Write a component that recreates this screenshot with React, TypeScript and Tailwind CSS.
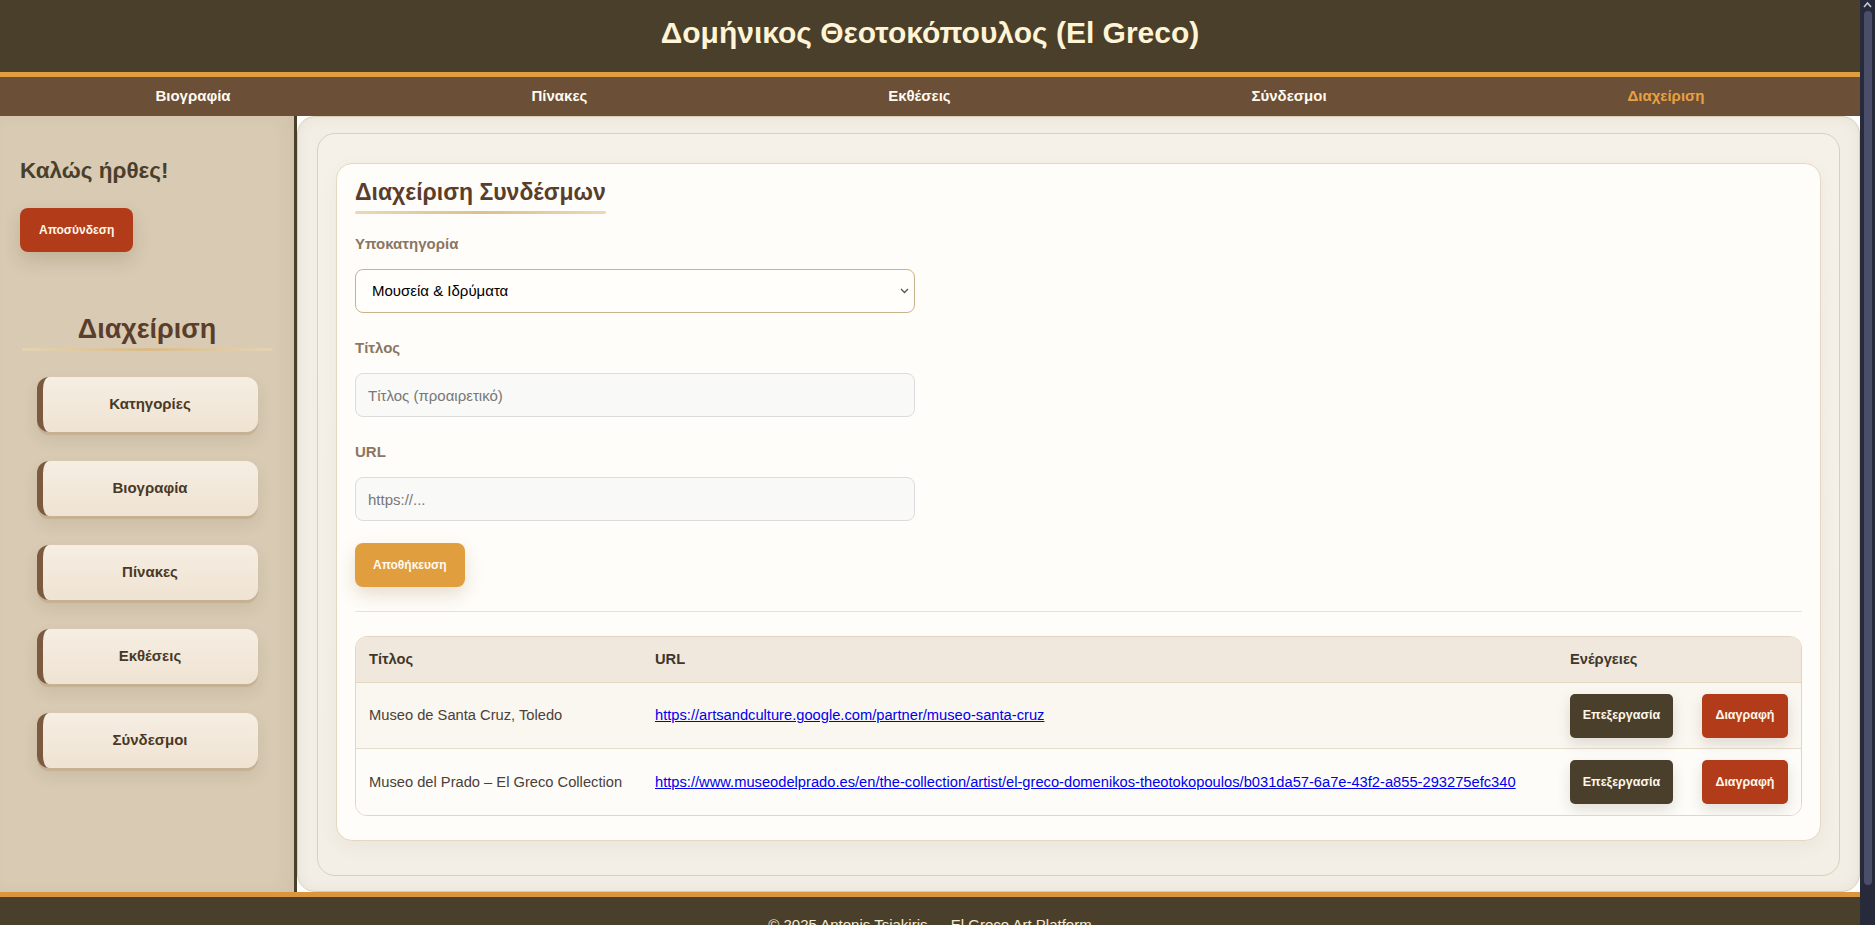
import React from "react";

const navItems = ["Βιογραφία", "Πίνακες", "Εκθέσεις", "Σύνδεσμοι", "Διαχείριση"];
const adminLinks = ["Κατηγορίες", "Βιογραφία", "Πίνακες", "Εκθέσεις", "Σύνδεσμοι"];
const links = [
  {
    title: "Museo de Santa Cruz, Toledo",
    url: "https://artsandculture.google.com/partner/museo-santa-cruz",
    bg: "bg-[#faf7f1]",
  },
  {
    title: "Museo del Prado – El Greco Collection",
    url: "https://www.museodelprado.es/en/the-collection/artist/el-greco-domenikos-theotokopoulos/b031da57-6a7e-43f2-a855-293275efc340",
    bg: "bg-[#fdfcf8]",
  },
];

function Sidebar() {
  return (
    <aside className="w-[297px] shrink-0 border-r-[3px] border-[#4a3f2a] bg-[#d8cab3] shadow-[inset_-8px_0_14px_rgba(120,90,50,0.06)]">
      <div className="px-5 pt-[42px]">
        <h2 className="text-[22.5px] leading-[26px] font-bold text-[#4a3f2a]">Καλώς ήρθες!</h2>
        <button className="mt-6 h-[44px] rounded-lg bg-[#b23c1a] px-[19px] text-[12px] font-bold text-[#fff6e6] shadow-[0_8px_18px_rgba(90,60,30,0.18)]">
          Αποσύνδεση
        </button>
      </div>

      <div className="mt-[60px] flex flex-col items-center">
        <h2 className="text-[27px] leading-[34px] font-bold text-[#5a3e2b]">Διαχείριση</h2>
        <div className="mt-[2px] h-[3px] w-[251px] rounded-full bg-linear-to-r from-[#e4d3b4] via-[#d9bb8a] to-[#e4d3b4]" />
        <div className="mt-[26px] flex flex-col gap-[29px]">
          {adminLinks.map((l) => (
            <button
              key={l}
              className="h-[55px] w-[221px] rounded-xl border-l-[6px] border-[#7b5a40] bg-linear-to-b from-[#f6eee3] to-[#efe3d2] text-[15px] font-bold text-[#4a3826] shadow-[0_3px_0_#c6b194,0_8px_16px_rgba(90,60,30,0.10)]"
            >
              {l}
            </button>
          ))}
        </div>
      </div>
    </aside>
  );
}

function Field({ label, children, first }: { label: string; children: React.ReactNode; first?: boolean }) {
  return (
    <div className={first ? "mt-[21px]" : "mt-[26px]"}>
      <label className="block text-[15px] leading-[18px] font-bold text-[#8b7662]">{label}</label>
      <div className="mt-4">{children}</div>
    </div>
  );
}

function LinksCard() {
  return (
    <div className="rounded-2xl border border-[#e4d8c2] bg-[#fffdf9] px-[18px] pt-[14px] pb-6 shadow-[0_6px_18px_rgba(120,90,50,0.06)]">
      <div className="inline-flex flex-col">
        <h2 className="text-[23px] leading-[29px] font-bold text-[#5a3e2b]">Διαχείριση Συνδέσμων</h2>
        <div className="mt-1 h-[3px] rounded-full bg-linear-to-r from-[#ead8b6] via-[#dcc08f] to-[#ead8b6]" />
      </div>

      <div className="w-[560px]">
        <Field label="Υποκατηγορία" first>
          <div className="relative">
            <select className="h-[44px] w-full appearance-none rounded-lg border border-[#c9b38e] bg-[#fffefa] px-4 text-[15px] text-black">
              <option>Μουσεία &amp; Ιδρύματα</option>
            </select>
            <svg
              width="9"
              height="6"
              viewBox="0 0 9 6"
              className="pointer-events-none absolute top-[19px] right-[6px]"
            >
              <path d="M1 1 L4.5 4.5 L8 1" stroke="#555" strokeWidth="1.3" fill="none" />
            </svg>
          </div>
        </Field>
        <Field label="Τίτλος">
          <input
            placeholder="Τίτλος (προαιρετικό)"
            className="h-[44px] w-full rounded-lg border border-[#dcdcdc] bg-[#f9f9f8] px-3 text-[15px] placeholder:text-[#777]"
          />
        </Field>
        <Field label="URL">
          <input
            placeholder="https://..."
            className="h-[44px] w-full rounded-lg border border-[#dcdcdc] bg-[#f9f9f8] px-3 text-[15px] placeholder:text-[#777]"
          />
        </Field>
      </div>

      <button className="mt-[22px] h-[44px] rounded-lg bg-[#e09e3f] px-[18px] text-[12px] font-bold text-[#fffaf0] shadow-[0_8px_18px_rgba(120,80,30,0.18)]">
        Αποθήκευση
      </button>

      <div className="mt-6 h-px bg-[#e8e1d5]" />

      <div className="mt-6 overflow-hidden rounded-xl border border-[#e2d6c1]">
        <div className="grid h-[46px] grid-cols-[286px_1fr_244px] items-center border-b border-[#e3d7c3] bg-[#f0e8dc] text-[14.7px] font-bold text-[#3f372b]">
          <div className="px-[13px]">Τίτλος</div>
          <div className="px-[13px]">URL</div>
          <div className="px-[13px]">Ενέργειες</div>
        </div>
        {links.map((r, i) => (
          <div
            key={r.url}
            className={`grid h-[66px] grid-cols-[286px_1fr_244px] items-center text-[14.7px] ${r.bg} ${
              i < links.length - 1 ? "border-b border-[#e6dccb]" : ""
            }`}
          >
            <div className="px-[13px] text-[#4a4038]">{r.title}</div>
            <div className="px-[13px]">
              <a href="#" className="text-[#0000ee] underline">
                {r.url}
              </a>
            </div>
            <div className="flex items-center gap-[29px] px-[13px]">
              <button className="h-[44px] w-[104px] rounded-[5px] bg-[#4a3f2a] text-[12.5px] font-bold text-[#fff6e8] shadow-[0_6px_14px_rgba(60,40,20,0.14)]">
                Επεξεργασία
              </button>
              <button className="h-[44px] w-[87px] rounded-[5px] bg-[#b23c1a] text-[12.5px] font-bold text-[#fff6e8] shadow-[0_6px_14px_rgba(60,40,20,0.14)]">
                Διαγραφή
              </button>
            </div>
          </div>
        ))}
      </div>
    </div>
  );
}

function Scrollbar() {
  return (
    <div className="flex w-[15px] shrink-0 flex-col items-center bg-[#262a3b]">
      <svg width="9" height="8" viewBox="0 0 9 8" className="mt-[1px]">
        <path d="M1 6 L4.5 2 L8 6" stroke="#c8cbd6" strokeWidth="1.6" fill="none" />
      </svg>
      <div className="mt-[2px] h-[874px] w-[8px] rounded-full bg-[#4a4e69]" />
    </div>
  );
}

export default function App() {
  return (
    <div className="flex h-screen overflow-hidden font-['Liberation_Sans',Arial,sans-serif]">
      <div className="flex min-w-0 flex-1 flex-col">
        <header className="h-[77px] shrink-0 border-b-[5px] border-[#e09e3f] bg-[#4a3f2a] pt-[15px] text-center">
          <h1 className="text-[30px] leading-[36px] font-bold text-[#fff4d6]">Δομήνικος Θεοτοκόπουλος (El Greco)</h1>
        </header>
        <nav className="flex h-[39px] shrink-0 items-center justify-around bg-[#6b4f36] px-[5px] text-[15px] font-bold">
          {navItems.map((n) => (
            <a key={n} href="#" className={n === "Διαχείριση" ? "text-[#e9a042]" : "text-[#fffaf0]"}>
              {n}
            </a>
          ))}
        </nav>

        <div className="flex shrink-0">
          <Sidebar />
          <main className="flex-1 rounded-[18px] border border-[#d9cdb6] bg-[#f2eee5] px-[19px] pt-4 pb-[15px] shadow-[inset_0_0_14px_rgba(120,90,50,0.07)]">
            <section className="rounded-[18px] border border-[#dccfb5] bg-linear-to-b from-[#f5f1e9] to-[#f3efe6] px-[18px] pt-[29px] pb-[34px]">
              <LinksCard />
            </section>
          </main>
        </div>

        <footer className="shrink-0 border-t-[5px] border-[#d9963c] bg-[#4a3f2a] py-4 text-center text-[15px] leading-6 text-[#f6ecd4]">
          © 2025 Antonis Tsiakiris — El Greco Art Platform
        </footer>
      </div>
      <Scrollbar />
    </div>
  );
}
